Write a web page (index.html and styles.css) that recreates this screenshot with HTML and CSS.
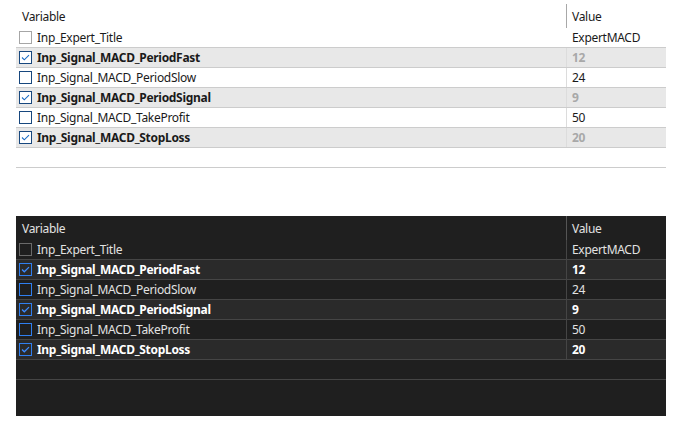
FILE: index.html
```html
<!DOCTYPE html>
<html>
<head>
<meta charset="utf-8">
<link rel="stylesheet" href="styles.css">
</head>
<body>
<div class="page">
  <div class="grid light">
    <div class="head">
      <div class="c-var">Variable</div>
      <div class="c-val">Value</div>
    </div>
    <div class="row first">
      <div class="c-var"><span class="box dim"></span>Inp_Expert_Title</div>
      <div class="c-val">ExpertMACD</div>
    </div>
    <div class="row on">
      <div class="c-var"><span class="box"><svg viewBox="0 0 13 13"><path d="M3 6.5 L5.3 8.8 L10 4.1"/></svg></span>Inp_Signal_MACD_PeriodFast</div>
      <div class="c-val">12</div>
    </div>
    <div class="row">
      <div class="c-var"><span class="box"></span>Inp_Signal_MACD_PeriodSlow</div>
      <div class="c-val">24</div>
    </div>
    <div class="row on">
      <div class="c-var"><span class="box"><svg viewBox="0 0 13 13"><path d="M3 6.5 L5.3 8.8 L10 4.1"/></svg></span>Inp_Signal_MACD_PeriodSignal</div>
      <div class="c-val">9</div>
    </div>
    <div class="row">
      <div class="c-var"><span class="box"></span>Inp_Signal_MACD_TakeProfit</div>
      <div class="c-val">50</div>
    </div>
    <div class="row on">
      <div class="c-var"><span class="box"><svg viewBox="0 0 13 13"><path d="M3 6.5 L5.3 8.8 L10 4.1"/></svg></span>Inp_Signal_MACD_StopLoss</div>
      <div class="c-val">20</div>
    </div>
    <div class="row empty"></div>
  </div>

  <div class="grid dark">
    <div class="head">
      <div class="c-var">Variable</div>
      <div class="c-val">Value</div>
    </div>
    <div class="row first">
      <div class="c-var"><span class="box dim"></span>Inp_Expert_Title</div>
      <div class="c-val">ExpertMACD</div>
    </div>
    <div class="row on">
      <div class="c-var"><span class="box"><svg viewBox="0 0 13 13"><path d="M3 6.5 L5.3 8.8 L10 4.1"/></svg></span>Inp_Signal_MACD_PeriodFast</div>
      <div class="c-val">12</div>
    </div>
    <div class="row">
      <div class="c-var"><span class="box"></span>Inp_Signal_MACD_PeriodSlow</div>
      <div class="c-val">24</div>
    </div>
    <div class="row on">
      <div class="c-var"><span class="box"><svg viewBox="0 0 13 13"><path d="M3 6.5 L5.3 8.8 L10 4.1"/></svg></span>Inp_Signal_MACD_PeriodSignal</div>
      <div class="c-val">9</div>
    </div>
    <div class="row">
      <div class="c-var"><span class="box"></span>Inp_Signal_MACD_TakeProfit</div>
      <div class="c-val">50</div>
    </div>
    <div class="row on">
      <div class="c-var"><span class="box"><svg viewBox="0 0 13 13"><path d="M3 6.5 L5.3 8.8 L10 4.1"/></svg></span>Inp_Signal_MACD_StopLoss</div>
      <div class="c-val">20</div>
    </div>
    <div class="row empty"></div>
  </div>
</div>
</body>
</html>
```

FILE: styles.css
```css
html, body {
  margin: 0;
  padding: 0;
  background: #ffffff;
}
*, *::before, *::after {
  box-sizing: border-box;
}
.page {
  padding: 4px 11px 0 16px;
  display: flex;
  flex-direction: column;
  gap: 12px;
  font-family: "Noto Sans", "Open Sans", sans-serif;
  font-size: 12px;
  letter-spacing: -0.3px;
}
.grid {
  width: 650px;
  height: 200px;
  display: flex;
  flex-direction: column;
}
.head {
  display: flex;
  height: 24px;
  align-items: stretch;
}
.row {
  display: flex;
  height: 20px;
  border-bottom: 1px solid;
  align-items: stretch;
}
.c-var {
  width: 550px;
  display: flex;
  align-items: center;
  padding-left: 3px;
  white-space: nowrap;
}
.head .c-var {
  padding-left: 6px;
}
.c-val {
  flex: 1;
  display: flex;
  align-items: center;
  padding-left: 5px;
  border-left: 1px solid;
}
.row.empty .c-val, .row.empty .c-var { display: none; }
.box {
  width: 13px;
  height: 13px;
  border: 1px solid;
  margin-right: 5px;
  display: inline-flex;
  flex: none;
}
.box svg {
  width: 13px;
  height: 13px;
  margin: -1px 0 0 -1px;
  overflow: visible;
}
.box path {
  fill: none;
  stroke-width: 1.1;
}
.on .c-var, .on .c-val {
  font-weight: 700;
}

/* light */
.light { background: #ffffff; color: #1a1a1a; }
.light .row { border-bottom-color: #cccccc; }
.light .head .c-val { border-left-color: #a8a8a8; }
.light .row .c-val { border-left-color: #dcdcdc; }
.light .row.first .c-val { border-left-color: transparent; }
.light .row.on { background: #e8e8e8; }
.light .row.on .c-val { color: #a8a8a8; }
.light .box { border-color: #17477e; background: #fff; }
.light .box.dim { border-color: #a6a6a6; }
.light .box path { stroke: #1c6cc4; }

/* dark */
.dark { background: #1f1f1f; color: #e2e2e2; }
.dark .row { border-bottom-color: #454545; }
.dark .head .c-val { border-left-color: #555555; }
.dark .row .c-val { border-left-color: #454545; }
.dark .row.on { background: #2a2a2a; color: #ffffff; }
.dark .box { border-color: #2f7ff0; }
.dark .box.dim { border-color: #6a6a6a; }
.dark .box path { stroke: #3d8cff; stroke-width: 1.3; }
```
